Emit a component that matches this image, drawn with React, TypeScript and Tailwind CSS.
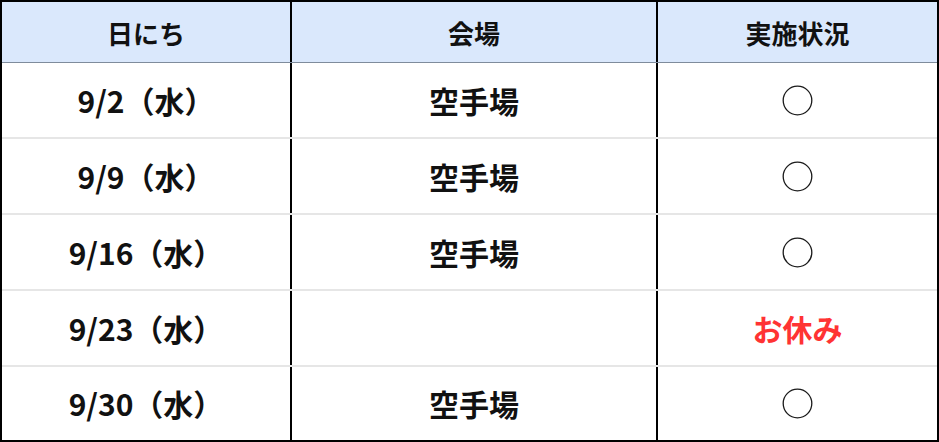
import React from "react";

const rows: { date: string; place: string; status: "ok" | "off" }[] = [
  { date: "9/2（水）", place: "空手場", status: "ok" },
  { date: "9/9（水）", place: "空手場", status: "ok" },
  { date: "9/16（水）", place: "空手場", status: "ok" },
  { date: "9/23（水）", place: "", status: "off" },
  { date: "9/30（水）", place: "空手場", status: "ok" },
];

function Ring() {
  return (
    <svg width="31" height="31" viewBox="0 0 31 31">
      <circle cx="15.5" cy="15.5" r="14.3" fill="none" stroke="#1a1a1a" strokeWidth="1.3" />
    </svg>
  );
}

export default function App() {
  return (
    <div
      className="w-[939px] h-[442px] bg-white border-2 border-black flex flex-col text-[#111] font-bold"
      style={{ fontFamily: '"Noto Sans CJK JP", "Noto Sans", sans-serif' }}
    >
      <div className="grid grid-cols-[290px_366px_1fr] h-[61px] shrink-0 bg-[#dae8fc] border-b border-[#7f8c9c] text-[26px]">
        <div className="flex items-center justify-center border-r-2 border-black">日にち</div>
        <div className="flex items-center justify-center border-r-2 border-black">会場</div>
        <div className="flex items-center justify-center">実施状況</div>
      </div>
      {rows.map((r, i) => (
        <div
          key={i}
          className={
            i < rows.length - 1
              ? "grid grid-cols-[290px_366px_1fr] h-[76px] shrink-0 border-b-2 border-[#e6e6e6] text-[30px]"
              : "grid grid-cols-[290px_366px_1fr] flex-1 text-[30px]"
          }
        >
          <div className="flex items-center justify-center border-r-2 border-black">{r.date}</div>
          <div className="flex items-center justify-center border-r-2 border-black">{r.place}</div>
          <div className="flex items-center justify-center">
            {r.status === "ok" ? <Ring /> : <span className="text-[#ff3333] text-[30px]">お休み</span>}
          </div>
        </div>
      ))}
    </div>
  );
}
